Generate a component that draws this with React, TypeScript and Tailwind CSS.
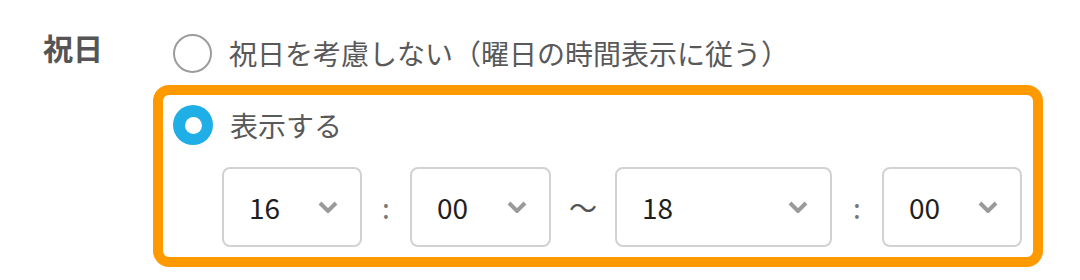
import React from "react";

const Chevron = () => (
  <svg width="20" height="12" viewBox="0 0 20 12" className="shrink-0">
    <path d="M2 2 L10 10 L18 2" fill="none" stroke="#9a9a9a" strokeWidth="4" strokeLinecap="butt" strokeLinejoin="miter" />
  </svg>
);

const Select = ({ value, w }: { value: string; w: string }) => (
  <div
    className={`${w} h-[80px] border-[2px] border-[#d2d2d2] rounded-[8px] flex items-center justify-between pl-[25px] pr-[22px] bg-white`}
  >
    <span className="text-[28px] text-[#1e1e1e] leading-none">{value}</span>
    <Chevron />
  </div>
);

export default function App() {
  return (
    <div
      className="w-[1080px] h-[280px] bg-white flex pl-[43px] pt-[33px]"
      style={{ fontFamily: '"Noto Sans CJK JP", "Noto Sans", sans-serif' }}
    >
      <div className="w-[110px] shrink-0 text-[30px] font-bold text-[#555] leading-[30px] -mt-[1px]">祝日</div>
      <div className="flex flex-col">
        <div className="flex items-center h-[40px] ml-[20px]">
          <span className="w-[39px] h-[39px] rounded-full border-[2px] border-[#9c9c9c] shrink-0" />
          <span className="ml-[17px] text-[28px] text-[#595959] leading-none">
            祝日を考慮しない（曜日の時間表示に従う）
          </span>
        </div>
        <div className="mt-[12px] w-[890px] h-[182px] border-[10px] border-[#ff9900] rounded-[16px] p-[10px]">
          <div className="flex items-center h-[40px]">
            <span className="w-[40px] h-[40px] rounded-full bg-[#20aee6] flex items-center justify-center shrink-0">
              <span className="w-[17px] h-[17px] rounded-full bg-white" />
            </span>
            <span className="ml-[17px] text-[28px] text-[#595959] leading-none">表示する</span>
          </div>
          <div className="mt-[22px] ml-[49px] flex items-center">
            <Select value="16" w="w-[140px]" />
            <span className="w-[48px] text-center text-[28px] text-[#777] leading-none">:</span>
            <Select value="00" w="w-[141px]" />
            <span className="w-[64px] text-center text-[28px] text-[#555] leading-none">〜</span>
            <Select value="18" w="w-[217px]" />
            <span className="w-[50px] text-center text-[28px] text-[#777] leading-none">:</span>
            <Select value="00" w="w-[140px]" />
          </div>
        </div>
      </div>
    </div>
  );
}
